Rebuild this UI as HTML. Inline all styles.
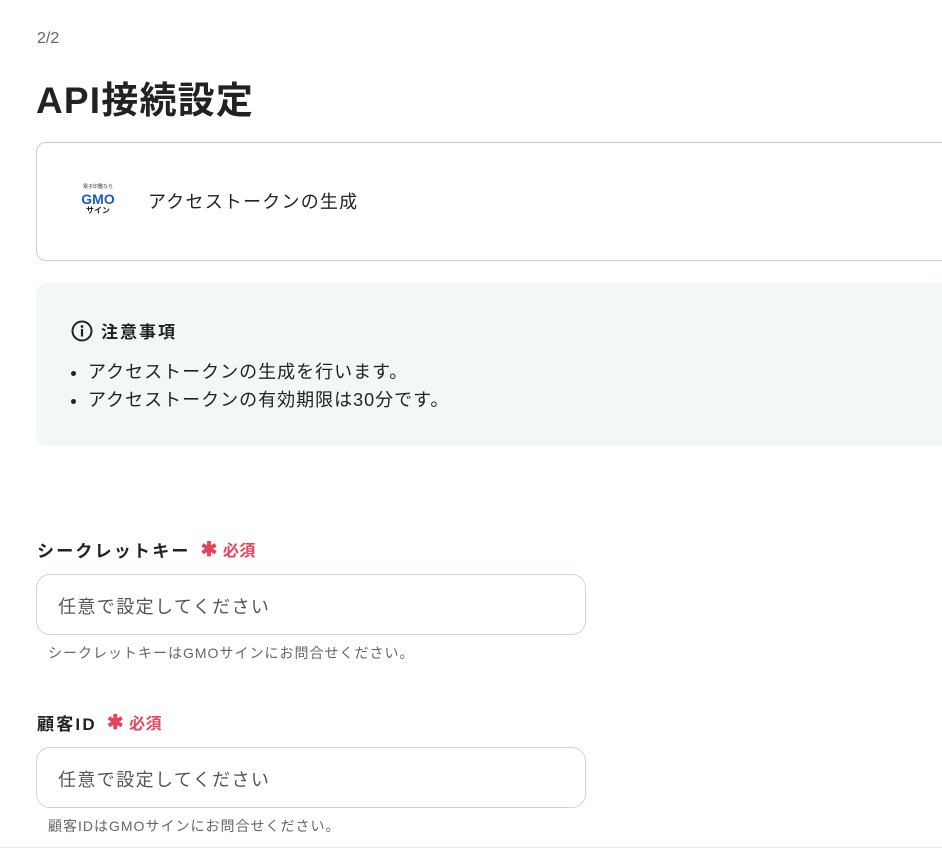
<!DOCTYPE html>
<html><head><meta charset="utf-8">
<style>
*{box-sizing:border-box;margin:0;padding:0}
body{width:942px;height:849px;overflow:hidden;background:#fff;font-family:"Liberation Sans","Noto Sans CJK JP",sans-serif;color:#222;position:relative}
.step{position:absolute;left:37px;top:30px;font-size:16px;color:#666}
h1{position:absolute;left:36px;top:70px;font-size:37px;font-weight:700;color:#222;letter-spacing:1.2px}
.card{position:absolute;left:36px;top:142px;width:940px;height:119px;border:1px solid #ccc;border-radius:10px}
.logo{position:absolute;left:38px;top:42px;width:46px;text-align:center;line-height:1}
.logo .s{font-size:5px;color:#333;display:block}
.logo .g{font-size:14px;font-weight:700;color:#1a5fb4;display:block;margin-top:2px}
.logo .t{font-size:8px;font-weight:700;color:#222;display:block;margin-top:1px}
.card .txt{position:absolute;left:111px;top:45px;font-size:18px;color:#222;letter-spacing:1.2px}
.note{position:absolute;left:36px;top:283px;width:940px;height:163px;background:#f2f8f8;border-radius:10px}
.note .hd{position:absolute;left:35px;top:35px;font-size:17px;font-weight:700;display:flex;align-items:center;letter-spacing:2px}
.note .hd svg{margin-right:8px}
.note ul{position:absolute;left:52px;top:75px;font-size:18px;line-height:28px;letter-spacing:1px}
.lbl{position:absolute;left:37px;font-size:17px;font-weight:700;color:#222;display:flex;align-items:center;letter-spacing:2.2px}
.req{color:#e8435b;font-size:16px;font-weight:700;margin-left:10px;letter-spacing:0.5px}
.req b{font-size:20px;margin-right:5px}
.inp{position:absolute;left:36px;width:550px;height:61px;border:1px solid #ccd3da;border-radius:14px;font-size:18px;color:#555;padding:18px 0 0 21px;letter-spacing:1.4px}
.help{position:absolute;left:48px;font-size:14px;color:#666;letter-spacing:1px}
</style></head><body>
<div class="step">2/2</div>
<h1>API接続設定</h1>
<div class="card">
 <div class="logo"><span class="s">電子印鑑なら</span><span class="g">GMO</span><span class="t">サイン</span></div>
 <div class="txt">アクセストークンの生成</div>
</div>
<div class="note">
 <div class="hd"><svg width="22" height="22" viewBox="0 0 22 22"><circle cx="11" cy="11" r="9.5" fill="none" stroke="#222" stroke-width="2"/><circle cx="11" cy="6.5" r="1.4" fill="#222"/><rect x="9.9" y="9" width="2.2" height="7.5" fill="#222"/></svg>注意事項</div>
 <ul><li>アクセストークンの生成を行います。</li><li>アクセストークンの有効期限は30分です。</li></ul>
</div>
<div class="lbl" style="top:537px">シークレットキー<span class="req"><b>✱</b>必須</span></div>
<div class="inp" style="top:574px">任意で設定してください</div>
<div class="help" style="top:643px">シークレットキーはGMOサインにお問合せください。</div>
<div class="lbl" style="top:710px">顧客ID<span class="req"><b>✱</b>必須</span></div>
<div class="inp" style="top:747px">任意で設定してください</div>
<div class="help" style="top:816px">顧客IDはGMOサインにお問合せください。</div>
<div style="position:absolute;left:0;top:847px;width:942px;height:1px;background:#eee"></div>
</body></html>
